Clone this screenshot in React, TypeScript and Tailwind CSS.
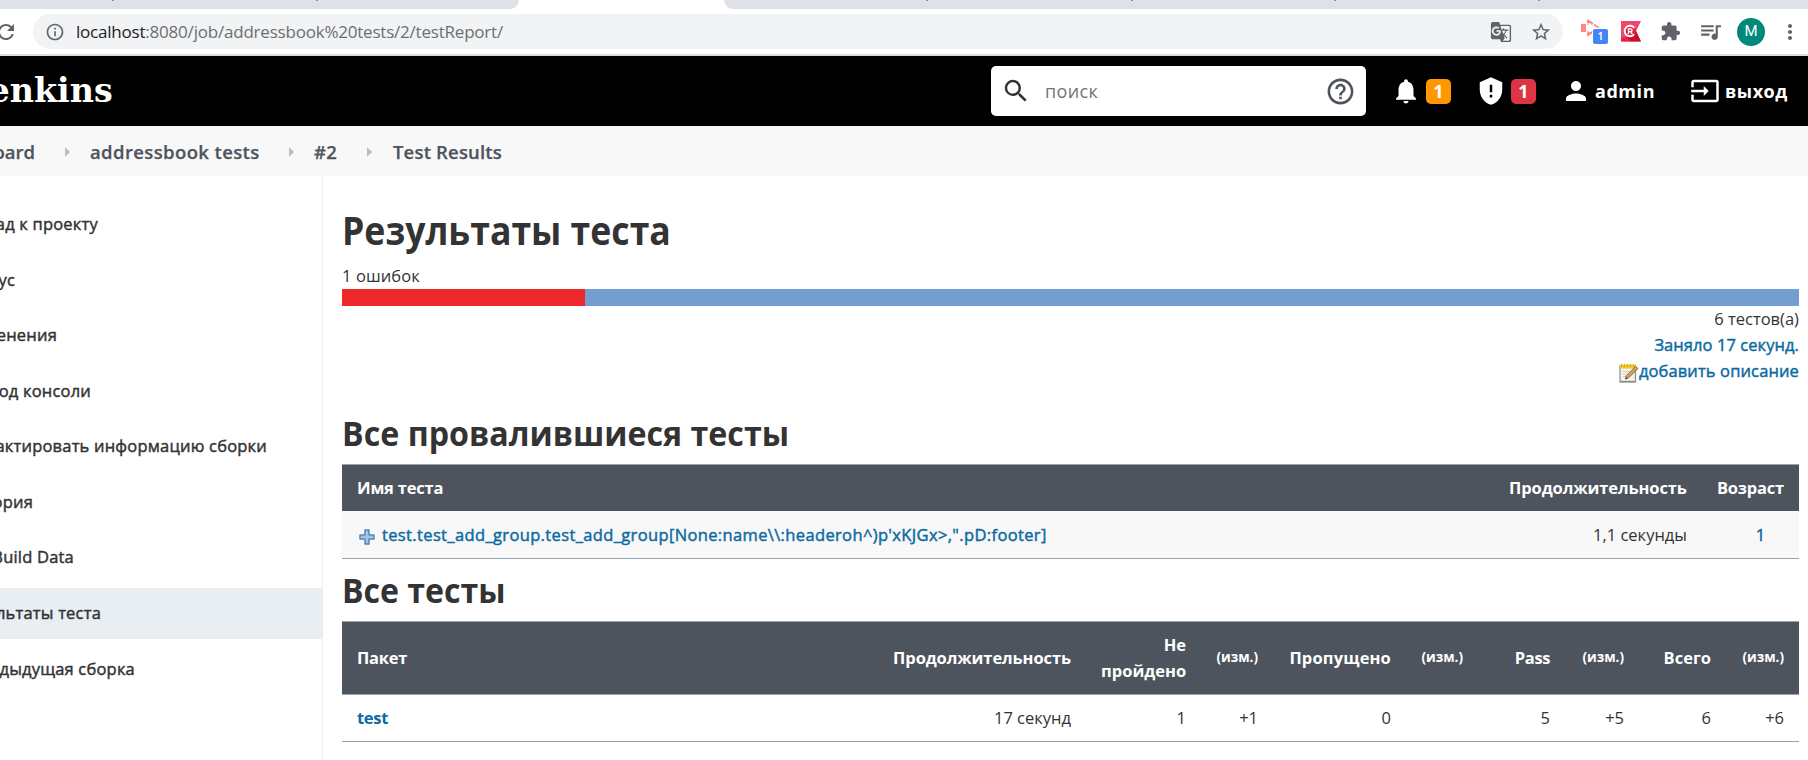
import type { ReactNode } from "react";
import {
  MdExtension,
  MdGTranslate,
  MdHelpOutline,
  MdInfoOutline,
  MdInput,
  MdMoreVert,
  MdNotifications,
  MdPerson,
  MdQueueMusic,
  MdRefresh,
  MdSearch,
  MdStarBorder,
} from "react-icons/md";

const medium = "[-webkit-text-stroke:0.45px_currentColor]";

function TabStrip() {
  return (
    <div className="flex h-[9px] shrink-0 bg-white">
      <div className="flex w-[519px] rounded-br-[9px] bg-[#dee1e6]">
        <i className="ml-[112px] h-px w-[2px] bg-[#8b8e93]" />
        <i className="ml-[202px] h-px w-[2px] bg-[#8b8e93]" />
      </div>
      <div className="w-[205px]" />
      <div className="flex flex-1 rounded-bl-[9px] bg-[#dee1e6]">
        <i className="ml-[202px] h-px w-[2px] bg-[#8b8e93]" />
        <i className="ml-[203px] h-px w-[2px] bg-[#8b8e93]" />
        <i className="ml-[201px] h-px w-[2px] bg-[#8b8e93]" />
        <i className="ml-[202px] h-px w-[2px] bg-[#8b8e93]" />
      </div>
    </div>
  );
}

function ShareExtension() {
  return (
    <div className="relative ml-[18px] h-[27px] w-[28px]">
      <svg width="20" height="18" viewBox="0 0 20 18" className="absolute left-0 top-[1px] text-[#ff8585]" fill="currentColor">
        <path d="M0 5h5v8H0z" />
        <path d="M6 4.500h2v1.500H6zM6 12h2v1.500H6zM10 5h1.500v1H10zM10 12h1.500v1H10z" opacity=".6" />
        <path d="M6 0l6 3.500v2.200L9 4.300 6 4zM6 17.500l5-2.700v-2l-5 .7zM13 4.500l6 4-2.500.3-3.500-2z" />
      </svg>
      <span className="absolute left-[12px] top-[11px] flex h-[15px] w-[15px] items-center justify-center rounded-[2px] bg-[#4285f4] text-[10.5px] font-semibold text-white">
        1
      </span>
    </div>
  );
}

function RedExtension() {
  return (
    <svg width="20" height="21" viewBox="0 0 20 21" className="ml-[12px]">
      <path d="M0 0h20l-5 10 5 10.500H0z" fill="#f0476a" />
      <path d="M6 15.500L14.500 9l5.500 11.500H9z" fill="#c8102e" />
      <path d="M0 17l6-1 4 4.500H0z" fill="#e02447" />
      <circle cx="9" cy="10" r="5.300" fill="#e02447" />
      <path d="M13.200 6.800A5.300 5.300 0 1013.200 13.200" fill="none" stroke="#fff" strokeWidth="1.900" />
      <path d="M7.500 13V7.800h2.200a1.400 1.400 0 010 2.800H7.500m2 0l1.800 2.400" fill="none" stroke="#fff" strokeWidth="1.300" />
    </svg>
  );
}

function AddressBar() {
  return (
    <div className="flex h-[45px] shrink-0 items-center bg-white">
      <MdRefresh size={24} className="-ml-[6px] shrink-0 text-[#5f6368]" />
      <div className="ml-[15px] flex h-[35px] w-[1530px] shrink-0 items-center rounded-full bg-[#f1f3f4] text-[#5f6368]">
        <MdInfoOutline size={20} className="ml-[12px]" />
        <div className="ml-[11px] flex-1 whitespace-nowrap text-[17px] tracking-[-0.21px] text-[#6b6f73]">
          <span className="text-[#202124]">localhost</span>:8080/job/addressbook%20tests/2/testReport/
        </div>
        <MdGTranslate size={22} />
        <MdStarBorder size={22} className="ml-[18px] mr-[11px]" />
      </div>
      <ShareExtension />
      <RedExtension />
      <MdExtension size={21} className="ml-[19px] text-[#5f6368]" />
      <MdQueueMusic size={25} className="ml-[17px] text-[#5f6368]" />
      <div className="ml-[14px] flex h-[28px] w-[28px] items-center justify-center rounded-full bg-[#00897b] font-['Roboto',sans-serif] text-[15px] text-white">
        M
      </div>
      <MdMoreVert size={24} className="ml-[13px] shrink-0 text-[#5f6368]" />
    </div>
  );
}

function ShieldIcon() {
  return (
    <svg width="30" height="30" viewBox="0 0 24 24" fill="currentColor">
      <path
        fillRule="evenodd"
        d="M12 1l9 4v6c0 5.550-3.840 10.740-9 12-5.160-1.260-9-6.450-9-12V5zM11 7v6h2V7zM11 15v2.200h2V15z"
      />
    </svg>
  );
}

function Header() {
  return (
    <header className="flex h-[70px] shrink-0 items-center bg-black text-[18px] font-bold text-white">
      <div className="flex h-full w-[113px] justify-end overflow-hidden pt-[11px]">
        <span className="origin-right scale-x-[0.98] font-['DejaVu_Serif',serif] text-[34px] leading-[46px]">enkins</span>
      </div>
      <div className="ml-[878px] flex h-[50px] w-[375px] items-center rounded-[5px] bg-white">
        <MdSearch size={30} className="ml-[10px] text-[#333]" />
        <span className="ml-[14px] flex-1 text-[18px] font-normal tracking-[0.33px] text-[#757575]">поиск</span>
        <MdHelpOutline size={31} className="mr-[10px] text-[#4d545d]" />
      </div>
      <MdNotifications size={30} className="ml-[25px]" />
      <Badge className="ml-[5px] bg-[#ff9800]" />
      <span className="ml-[25px]"><ShieldIcon /></span>
      <Badge className="ml-[5px] bg-[#dc3545]" />
      <MdPerson size={30} className="ml-[25px]" />
      <span className="ml-[4px] tracking-[0.55px]">admin</span>
      <MdInput size={30} className="ml-[35px]" />
      <span className="ml-[5px] whitespace-nowrap tracking-[0.5px]">выход</span>
    </header>
  );
}

function Badge({ className }: { className: string }) {
  return (
    <span className={"flex h-[25px] w-[25px] items-center justify-center rounded-[5px] text-[18px] " + className}>1</span>
  );
}

function Arrow() {
  return (
    <svg width="5" height="10" viewBox="0 0 5 10" className="shrink-0">
      <path d="M0 0l5 5-5 5z" fill="#bbb" />
    </svg>
  );
}

function Breadcrumbs() {
  return (
    <nav className="flex h-[50px] shrink-0 items-center bg-[#f8f8f8] pt-[1px] text-[18.5px] font-semibold text-[#4d545d] [-webkit-text-stroke:0.25px_currentColor]">
      <span className="flex w-[65px] justify-end overflow-hidden whitespace-nowrap pr-[30px]">oard</span>
      <Arrow />
      <span className="ml-[20px] w-[199px] whitespace-nowrap tracking-[0.38px]">addressbook tests</span>
      <Arrow />
      <span className="ml-[20px] w-[53px] tracking-[0.23px]">#2</span>
      <Arrow />
      <span className="ml-[21px] whitespace-nowrap tracking-[0.17px]">Test Results</span>
    </nav>
  );
}

const sideItems = [
  { label: "ад к проекту", width: "w-[98px]" },
  { label: "ус", width: "w-[15px]" },
  { label: "енения", width: "w-[57px]" },
  { label: "од консоли", width: "w-[91px]" },
  { label: "актировать информацию сборки", width: "w-[267px]" },
  { label: "ория", width: "w-[33px]" },
  { label: "Build Data", width: "w-[74px]" },
  { label: "льтаты теста", width: "w-[101px]", active: true },
  { label: "дыдущая сборка", width: "w-[135px]" },
];

function Sidebar() {
  return (
    <aside className="flex w-[323px] shrink-0 flex-col gap-[4.600px] border-r border-[#e9eef1] pt-[22.800px]">
      {sideItems.map((item) => (
        <div key={item.label} className={"flex h-[51px] shrink-0 items-center " + (item.active ? "bg-[#e8eef1]" : "")}>
          <span className={"flex justify-end overflow-hidden whitespace-nowrap tracking-[0.2px] " + medium + " " + item.width}>
            {item.label}
          </span>
        </div>
      ))}
    </aside>
  );
}

function NotepadIcon() {
  return (
    <svg width="20" height="20" viewBox="0 0 20 20" className="mt-[4px]">
      <rect x="1" y="3" width="15.500" height="16" fill="#f2f2ee" stroke="#8e8e88" strokeWidth="1.200" />
      <path d="M1 18.500h15.500" stroke="#888" strokeWidth="1.300" />
      <rect x="1" y="1.500" width="16" height="4" fill="#f0c92c" />
      <path d="M2.500 1v3M5.500 1v3M8.500 1v3M11.500 1v3M14.500 1v3" stroke="#c99a1c" strokeWidth=".8" />
      <path d="M4 8.500h7M4 11h5M4 13.500h3" stroke="#ccc" strokeWidth="1" />
      <path d="M6.500 16l1.200-3.500L16.500 3.500l2.500 2-9 9z" fill="#d0a45e" stroke="#6f5526" strokeWidth=".8" />
      <path d="M6.300 16.200l.8-2 1.300 1.200z" fill="#222" />
    </svg>
  );
}

function PlusIcon() {
  return (
    <svg width="16" height="16" viewBox="0 0 16 16" className="mt-[2px] shrink-0">
      <path d="M6 1h4v5h5v4h-5v5H6v-5H1V6h5z" fill="#a9c5e6" stroke="#5584bd" strokeWidth="1.500" strokeLinejoin="round" />
    </svg>
  );
}

function HeadCell({ children, className = "" }: { children: ReactNode; className?: string }) {
  return <div className={"whitespace-nowrap px-[15px] font-bold text-white " + className}>{children}</div>;
}

function Cell({ children }: { children?: ReactNode }) {
  return <div className="whitespace-nowrap pr-[15px] text-right">{children}</div>;
}

const packageGrid = "grid grid-cols-[744px_115px_72px_133px_72px_87px_74px_87px_73px] items-center";
const diffHead = "pb-[2px] text-right text-[13.5px]";

function FailedTable() {
  return (
    <div className="w-[1457px] border-y border-[#98a4ad]">
      <div className="flex h-[46px] items-center bg-[#4d545d]">
        <HeadCell className="flex-1 tracking-[-0.2px]">Имя теста</HeadCell>
        <HeadCell className="tracking-[-0.1px]">Продолжительность</HeadCell>
        <HeadCell className="tracking-[-0.2px]">Возраст</HeadCell>
      </div>
      <div className="flex h-[47px] items-center bg-[#f8f8f8] pt-[2px]">
        <div className="ml-[17px] flex flex-1 items-center text-[#0b6aa2]">
          <PlusIcon />
          <span className={"ml-[7px] whitespace-nowrap tracking-[0.36px] " + medium}>
            {"test.test_add_group.test_add_group[None:name\\\\:headeroh^)p'xKJGx>,\".pD:footer]"}
          </span>
        </div>
        <span>1,1 секунды</span>
        <span className={"ml-[35px] w-[77px] text-center text-[#0b6aa2] " + medium}>1</span>
      </div>
    </div>
  );
}

function PackageTable() {
  return (
    <div className="w-[1457px] border-y border-[#98a4ad]">
      <div className={"h-[73px] border-b border-[#98a4ad] bg-[#4d545d] leading-[26px] " + packageGrid}>
        <div className="flex justify-between">
          <HeadCell className="tracking-[-0.27px]">Пакет</HeadCell>
          <HeadCell className="tracking-[-0.1px]">Продолжительность</HeadCell>
        </div>
        <HeadCell className="text-right">
          Не
          <br />
          пройдено
        </HeadCell>
        <HeadCell className={diffHead}>(изм.)</HeadCell>
        <HeadCell className="text-right tracking-[0.15px]">Пропущено</HeadCell>
        <HeadCell className={diffHead}>(изм.)</HeadCell>
        <HeadCell className="text-right tracking-[-0.4px]">Pass</HeadCell>
        <HeadCell className={diffHead}>(изм.)</HeadCell>
        <HeadCell className="text-right">Всего</HeadCell>
        <HeadCell className={diffHead}>(изм.)</HeadCell>
      </div>
      <div className={"h-[46px] " + packageGrid}>
        <div className="flex justify-between">
          <span className="pl-[15px] font-bold tracking-[-0.3px] text-[#0b6aa2]">test</span>
          <Cell>17 секунд</Cell>
        </div>
        <Cell>1</Cell>
        <Cell>+1</Cell>
        <Cell>0</Cell>
        <Cell />
        <Cell>5</Cell>
        <Cell>+5</Cell>
        <Cell>6</Cell>
        <Cell>+6</Cell>
      </div>
    </div>
  );
}

function Results() {
  return (
    <main className="flex-1 pl-[19px] pt-[23px]">
      <h1 className="h-[64px] origin-left scale-x-[0.890] whitespace-nowrap text-[40px] font-bold leading-[62px]">Результаты теста</h1>
      <div className="h-[26px] tracking-[0.1px] leading-[26px]">1 ошибок</div>
      <div className="flex h-[17px] w-[1457px] bg-[#729fcf]">
        <div className="w-1/6 bg-[#ef2929]" />
      </div>
      <div className="flex w-[1457px] flex-col items-end leading-[26px]">
        <span>6 тестов(а)</span>
        <span className={"tracking-[0.07px] text-[#0b6aa2] " + medium}>Заняло 17 секунд.</span>
        <span className="flex items-center text-[#0b6aa2]">
          <NotepadIcon />
          <span className={"tracking-[0.12px] " + medium}>добавить описание</span>
        </span>
      </div>
      <h2 className="mt-[24px] h-[56px] origin-left scale-x-[0.934] whitespace-nowrap text-[34.5px] font-bold leading-[50px]">
        Все провалившиеся тесты
      </h2>
      <FailedTable />
      <h2 className="mt-[6px] h-[56px] origin-left scale-x-[0.930] whitespace-nowrap text-[34.5px] font-bold leading-[50px]">Все тесты</h2>
      <PackageTable />
    </main>
  );
}

export default function App() {
  return (
    <div className="flex h-[760px] w-[1808px] flex-col overflow-hidden bg-white font-['Open_Sans',sans-serif] text-[16.5px] text-[#333]">
      <TabStrip />
      <AddressBar />
      <div className="h-[2px] shrink-0 bg-[#dadce0]" />
      <Header />
      <Breadcrumbs />
      <div className="flex flex-1">
        <Sidebar />
        <Results />
      </div>
    </div>
  );
}
